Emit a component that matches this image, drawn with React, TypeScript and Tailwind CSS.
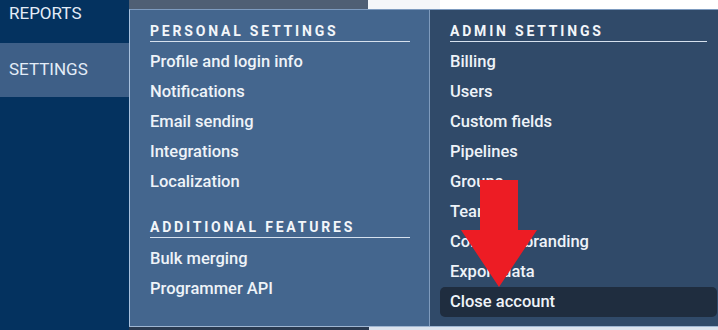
import React from 'react';

const personal = ['Profile and login info', 'Notifications', 'Email sending', 'Integrations', 'Localization'];
const additional = ['Bulk merging', 'Programmer API'];
const admin = [
  'Billing',
  'Users',
  'Custom fields',
  'Pipelines',
  'Groups',
  'Teams',
  'Company branding',
  'Export data',
  'Close account',
];

const Heading: React.FC<{ children: React.ReactNode; className?: string }> = ({ children, className = '' }) => (
  <div
    className={`h-[21px] leading-[20px] text-[14px] font-bold tracking-[0.2em] text-[#f3f6fa] border-b border-[#d6e1ee] ${className}`}
  >
    {children}
  </div>
);

const Item: React.FC<{ label: string; active?: boolean }> = ({ label, active }) => (
  <div
    className={`h-[30px] leading-[30px] text-[16.5px] font-medium text-[#eef3f8] whitespace-nowrap ${
      active ? 'bg-[#1f2d3f] rounded-[5px] px-[10px]' : 'px-[10px]'
    }`}
  >
    {label}
  </div>
);

export default function App() {
  return (
    <div
      className="relative w-[718px] h-[330px] overflow-hidden flex bg-white"
      style={{ fontFamily: 'Roboto, "Liberation Sans", sans-serif' }}
    >
      {/* sidebar */}
      <div className="w-[129px] shrink-0 bg-[#04325f] flex flex-col text-[17px] text-[#e3ecf7]">
        <div className="h-[43px] pl-[9px] leading-[26px]">REPORTS</div>
        <div className="h-[54px] pl-[9px] flex items-center bg-[#3e5f87]">SETTINGS</div>
      </div>

      <div className="flex-1 flex flex-col">
        {/* page strip behind the menu */}
        <div className="h-[9px] flex">
          <div className="w-[239px] bg-[#4f5f74]" />
          <div className="w-[72px] bg-[#f4f6f9]" />
          <div className="flex-1 bg-white" />
        </div>

        {/* dropdown */}
        <div className="h-[318px] flex border-t border-b border-l border-t-[#7d9bbf] border-b-[#9fb6d2] border-l-[#a9c1dd]">
          <div className="w-[299px] shrink-0 bg-[#44668e] pt-[11px] pl-[20px] pr-[19px]">
            <Heading>PERSONAL SETTINGS</Heading>
            <div className="mt-[5px] -mx-[10px]">
              {personal.map((p) => (
                <Item key={p} label={p} />
              ))}
            </div>
            <Heading className="mt-[20px]">ADDITIONAL FEATURES</Heading>
            <div className="mt-[6px] -mx-[10px]">
              {additional.map((p) => (
                <Item key={p} label={p} />
              ))}
            </div>
          </div>
          <div className="flex-1 bg-[#304a69] border-l border-[#7f9bbd] pt-[11px] pl-[10px] pr-[1px]">
            <Heading className="mx-[10px]">ADMIN SETTINGS</Heading>
            <div className="mt-[5px]">
              {admin.map((a) => (
                <Item key={a} label={a} active={a === 'Close account'} />
              ))}
            </div>
          </div>
        </div>

        <div className="h-[3px] flex">
          <div className="w-[240px] bg-[#2a3a50]" />
          <div className="flex-1 bg-[#dbe3ee]" />
        </div>
      </div>

      {/* annotation arrow */}
      <svg className="absolute left-0 top-0 pointer-events-none" width="718" height="330">
        <polygon
          points="480,180 518,180 518,230 537,230 499,287 461,230 480,230"
          fill="#ed1c24"
        />
      </svg>
    </div>
  );
}
